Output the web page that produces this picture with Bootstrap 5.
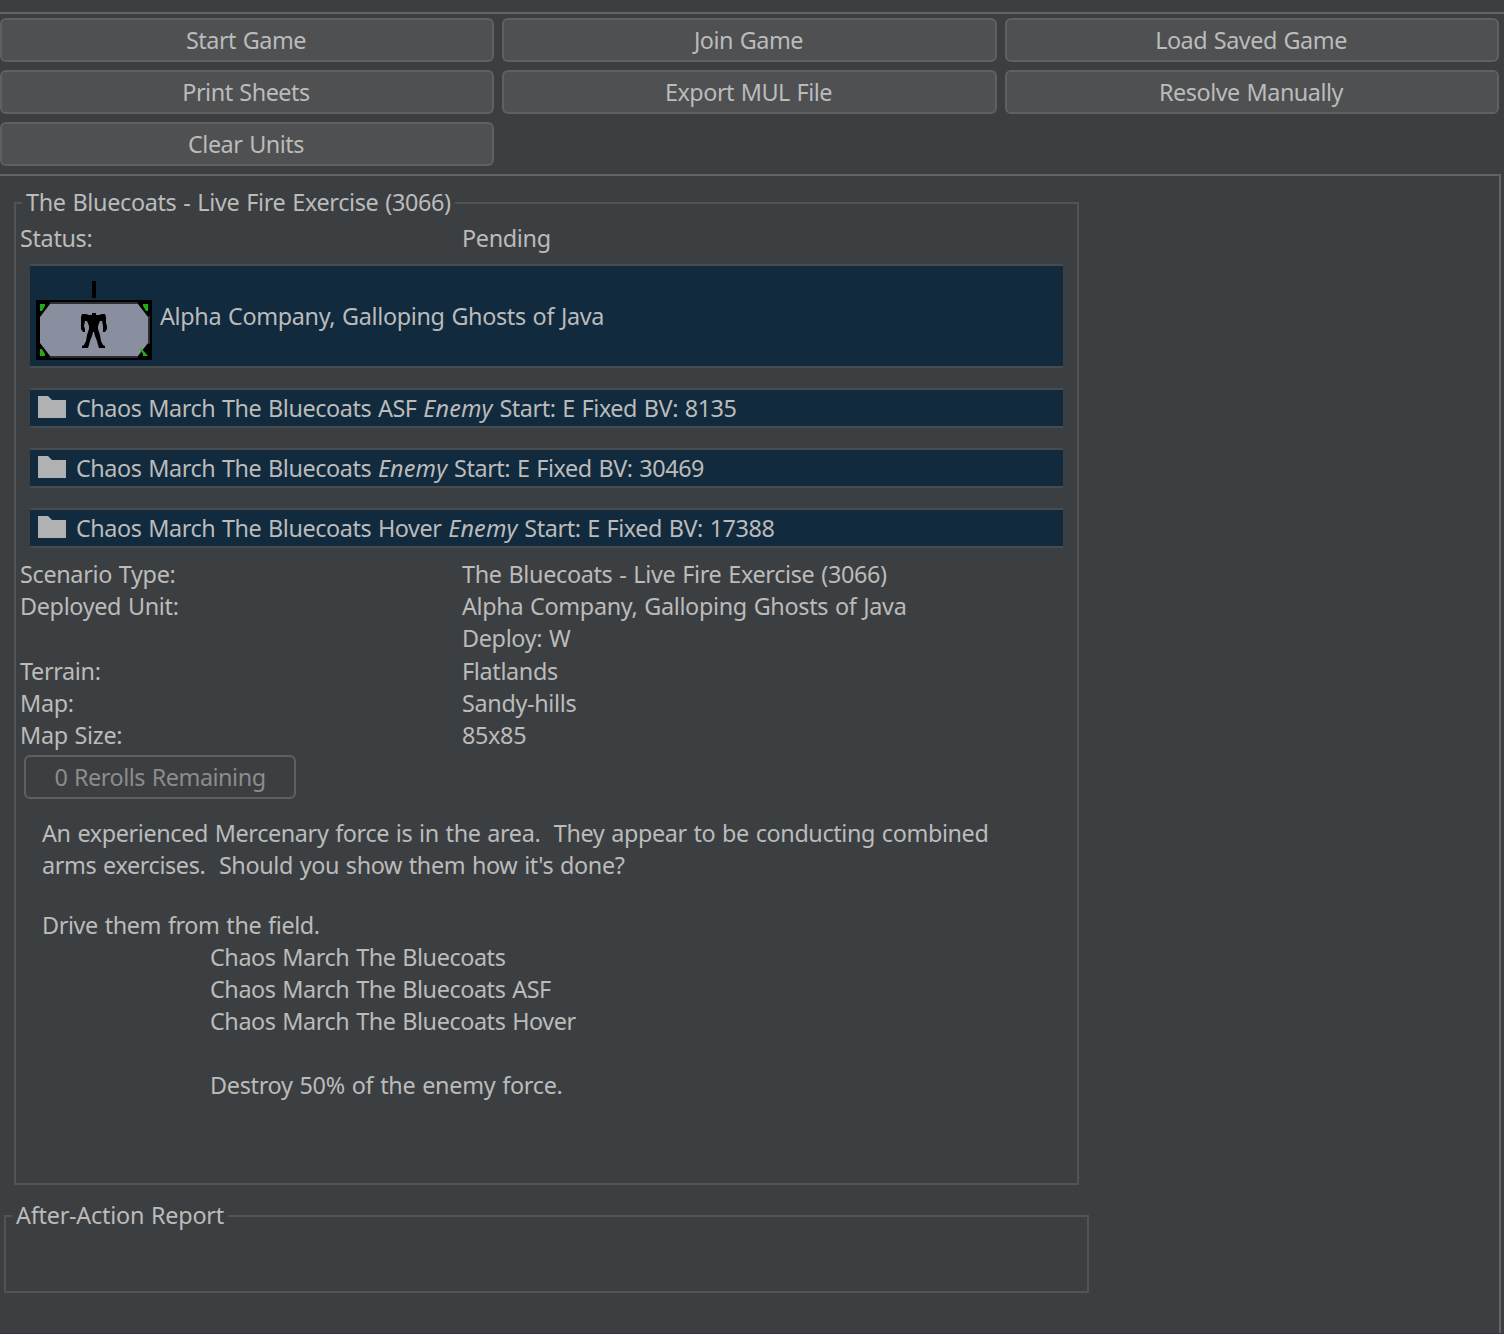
<!DOCTYPE html>
<html lang="en">
<head>
<meta charset="utf-8">
<title>Scenario</title>
<link href="https://cdn.jsdelivr.net/npm/bootstrap@5.3.0/dist/css/bootstrap.min.css" rel="stylesheet">
<style>
body{background:#3c3f41;color:#bbb;font:23.4px/32px "Noto Sans","Open Sans",sans-serif;letter-spacing:-.34px;word-spacing:1.1px;height:1334px;overflow:hidden;border-bottom:1px solid #36363a}
.toolbar-area{margin-top:12px;height:162px;border-top:2px solid #616365;padding:4px 5px 0 0}
.action-grid{display:grid;grid-template-columns:494px 495px 494px;gap:8px}
.btn-swing{height:44px;padding:0 2px 0 0;border:2px solid #5e6062;border-radius:6px;background:#4e5052;color:#bbb;font-size:inherit;line-height:40px;letter-spacing:-.48px;word-spacing:inherit}
.btn-swing:disabled{background:transparent;color:#8c8c8c;border-color:#5e6062;opacity:1}
.btn-reroll{width:272px;margin:4px 0 0 4px;padding:0}
.main-pane{width:1501px;height:1159px;border-top:2px solid #616365;border-right:2px solid #616365;padding:26px 0 0 4px}
.titled{border:2px solid #515355}
.titled-name{position:absolute;top:-18px;left:6px;padding:0 4px;background:#3c3f41;white-space:pre}
.scenario{width:1065px;height:983px;margin-left:10px;padding:18px 4px 0}
.report{width:1085px;height:78px;margin-top:30px}
.report .titled-name{letter-spacing:-.25px}
.info-row{height:32px}
.info-row.deploy{margin-bottom:1px}
.info-key{width:442px}
.force-box{margin:0 10px 20px;height:40px;border:solid #484b4d;border-width:2px 0;background:#112a3d;white-space:pre;letter-spacing:-.44px}
.force-box svg{flex:none;margin:-2px 10px 0 8px}
.force-box i{letter-spacing:.15px}
.force-box.company{height:104px;margin-top:10px;letter-spacing:-.35px}
.force-box.company svg{margin:8px 8px 0 6px}
.force-box.last{margin-bottom:10px}
.story{margin:18px 0 0 22px;white-space:pre;letter-spacing:-.39px}
.goals{margin-left:168px;letter-spacing:-.43px}
.goals .target{letter-spacing:-.3px;margin-top:32px}
.orders{margin-top:28px}
</style>
<script src="https://cdn.jsdelivr.net/npm/bootstrap@5.3.0/dist/js/bootstrap.bundle.min.js"></script>
</head>
<body>
<svg class="d-none"><symbol id="folder" viewBox="0 0 28 22"><path fill="#afb1b3" d="M0 0H10L14 4H28V22H0Z"/></symbol></svg>
<div class="toolbar-area">
 <div class="action-grid">
  <button class="btn btn-swing">Start Game</button>
  <button class="btn btn-swing">Join Game</button>
  <button class="btn btn-swing">Load Saved Game</button>
  <button class="btn btn-swing">Print Sheets</button>
  <button class="btn btn-swing">Export MUL File</button>
  <button class="btn btn-swing">Resolve Manually</button>
  <button class="btn btn-swing">Clear Units</button>
 </div>
</div>
<main class="main-pane">
 <section class="titled scenario position-relative">
  <div class="titled-name">The Bluecoats - Live Fire Exercise (3066)</div>
  <div class="info-row d-flex"><div class="info-key">Status:</div><div>Pending</div></div>
  <div class="force-box company d-flex align-items-center">
   <svg width="116" height="80" viewBox="0 0 116 80">
    <path fill="#000" d="M56 1h4v17h-4zM0 20h116v60H0z"/>
    <path fill="#8a8f9f" d="M14 24h88l10 13v26l-10 13H14L4 63V37z"/>
    <path fill="#2b2d33" d="M14 22h88v2H14zM14 76h88v2H14zM112 36h2v28h-2z"/>
    <path fill="#1bb00f" d="M4 24h5v2l-3 5H4zM112 24h-5v2l3 5h2zM4 76h5v-2l-3-5H4zM112 76h-5v-2l-3-5h2z"/>
    <path fill="#000" d="M56 33h4v2h3l3-1h3l1 3v6l1 3v3l-2 3h-2v-6l-1-5h-2l-2 5v3l2 6 1 6 2 4 2 1v2h-6l-1-3-1-4-2-5-1-4h-1l-1 4-2 5-1 4-1 3h-6v-2l2-1 2-4 1-6 2-6v-3l-2-5h-2l-1 5 1 3v3h-2l-2-3V37l1-3h4l3 1h3z"/>
   </svg><span>Alpha Company, Galloping Ghosts of Java</span>
  </div>
  <div class="force-box d-flex align-items-center"><svg width="28" height="22"><use href="#folder"/></svg><span>Chaos March The Bluecoats ASF <i>Enemy</i> Start: E Fixed BV: 8135</span></div>
  <div class="force-box d-flex align-items-center"><svg width="28" height="22"><use href="#folder"/></svg><span>Chaos March The Bluecoats <i>Enemy</i> Start: E Fixed BV: 30469</span></div>
  <div class="force-box last d-flex align-items-center"><svg width="28" height="22"><use href="#folder"/></svg><span>Chaos March The Bluecoats Hover <i>Enemy</i> Start: E Fixed BV: 17388</span></div>
  <div class="info-row d-flex"><div class="info-key">Scenario Type:</div><div>The Bluecoats - Live Fire Exercise (3066)</div></div>
  <div class="info-row d-flex"><div class="info-key">Deployed Unit:</div><div>Alpha Company, Galloping Ghosts of Java</div></div>
  <div class="info-row deploy d-flex"><div class="info-key"></div><div>Deploy: W</div></div>
  <div class="info-row d-flex"><div class="info-key">Terrain:</div><div>Flatlands</div></div>
  <div class="info-row d-flex"><div class="info-key">Map:</div><div>Sandy-hills</div></div>
  <div class="info-row d-flex"><div class="info-key">Map Size:</div><div>85x85</div></div>
  <button class="btn btn-swing btn-reroll d-block" disabled>0 Rerolls Remaining</button>
  <div class="story"><div>An experienced Mercenary force is in the area.  They appear to be conducting combined</div><div>arms exercises.  Should you show them how it's done?</div><div class="orders">Drive them from the field.</div><div class="goals"><div>Chaos March The Bluecoats</div><div>Chaos March The Bluecoats ASF</div><div>Chaos March The Bluecoats Hover</div><div class="target">Destroy 50% of the enemy force.</div></div></div>
 </section>
 <section class="titled report position-relative"><div class="titled-name">After-Action Report</div></section>
</main>
</body>
</html>
